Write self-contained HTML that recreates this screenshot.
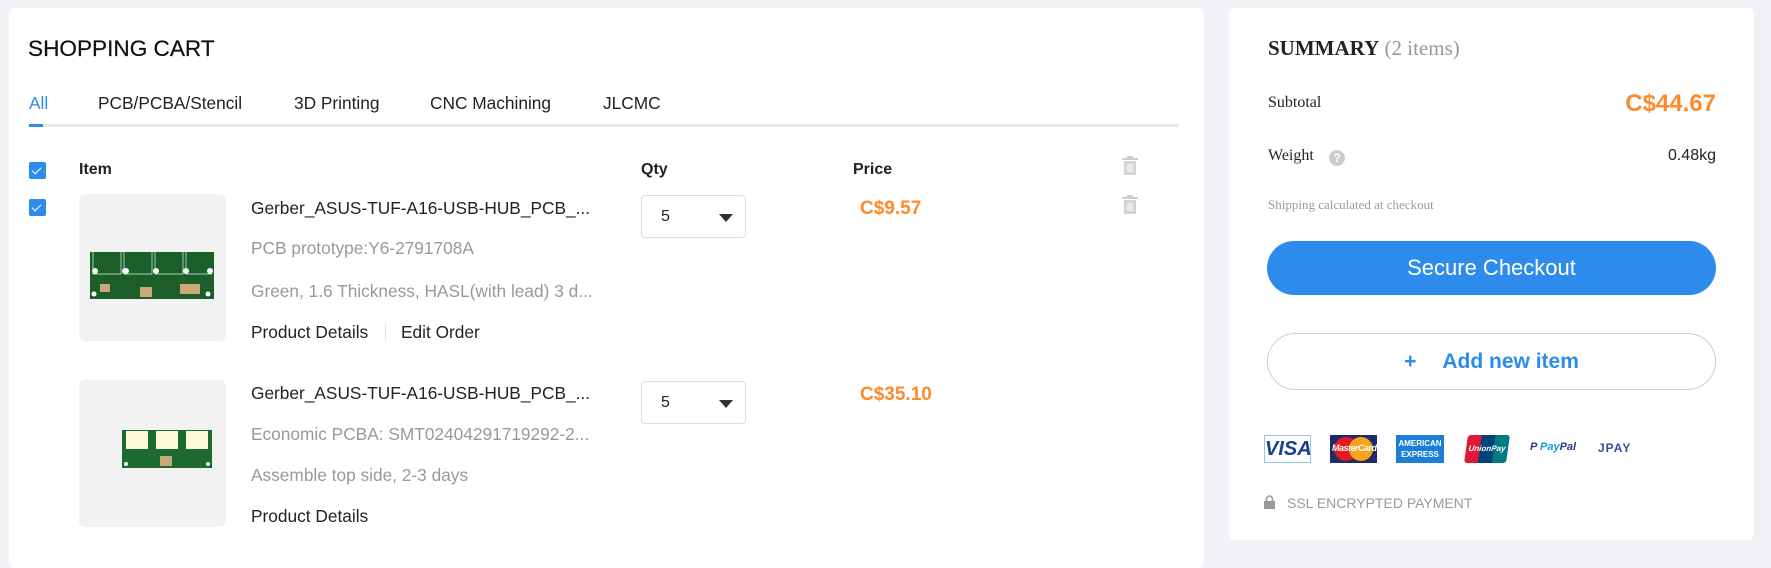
<!DOCTYPE html>
<html><head><meta charset="utf-8"><style>
*{margin:0;padding:0;box-sizing:border-box}
body{width:1771px;height:549px;background:#f0f2f5;font-family:"Liberation Sans",Arial,sans-serif;color:#222;position:relative;overflow:hidden}
.a{position:absolute;white-space:nowrap}
.panel{position:absolute;background:#fff;border-radius:6px}
.cb{position:absolute;width:17px;height:17px;background:#2d8ceb;border-radius:2px}
.cb:after{content:"";position:absolute;left:5px;top:3px;width:4px;height:8px;border:solid #fff;border-width:0 1.5px 1.5px 0;transform:rotate(45deg)}
.t16{font-size:16px}
.t17{font-size:17.3px}
.gray{color:#999}
.qty{position:absolute;width:105px;height:43px;border:1px solid #ddd;border-radius:4px}
.qty span{position:absolute;left:19px;top:12px;font-size:16px}
.qty i{position:absolute;left:77px;top:18px;border-left:7px solid transparent;border-right:7px solid transparent;border-top:8px solid #333}
.price{color:#ff8a2b;font-weight:bold;font-size:19px}
.img{position:absolute;background:#f2f2f2;border-radius:6px;width:147px;height:147px}
.serif{font-family:"Liberation Serif",serif}
.card{position:absolute;top:435px;height:28px}
</style></head><body>
<div class="panel" style="left:9px;top:8px;width:1195px;height:560px"></div>
<div class="panel" style="left:1229px;top:8px;width:525px;height:532px"></div>

<div class="a" style="left:28px;top:36px;font-size:22.6px;color:#111;-webkit-text-stroke:.2px #111">SHOPPING CART</div>
<div class="a t17" style="left:29px;top:93px;color:#2d8ceb">All</div>
<div class="a t17" style="left:98px;top:93px">PCB/PCBA/Stencil</div>
<div class="a t17" style="left:294px;top:93px">3D Printing</div>
<div class="a t17" style="left:430px;top:93px">CNC Machining</div>
<div class="a t17" style="left:603px;top:93px">JLCMC</div>
<div class="a" style="left:29px;top:124px;width:1150px;height:3px;background:#e4e7ee"></div>
<div class="a" style="left:29px;top:124px;width:14px;height:3px;background:#2d8ceb"></div>

<div class="cb" style="left:29px;top:162px"></div>
<div class="a t16" style="left:79px;top:161px;font-weight:bold">Item</div>
<div class="a t16" style="left:641px;top:161px;font-weight:bold">Qty</div>
<div class="a t16" style="left:853px;top:161px;font-weight:bold">Price</div>
<svg class="a" style="left:1121px;top:156px" width="18" height="20" viewBox="0 0 18 20"><rect x="1" y="2" width="16" height="2" fill="#ccc"/><rect x="6" y="0" width="6" height="2" fill="#ccc"/><path d="M3 5h12v14H3z" fill="#d4d4d4"/><path d="M7 8v8M9 8v8M11 8v8" stroke="#fff" stroke-width="1"/></svg>

<!-- row1 -->
<div class="cb" style="left:29px;top:199px"></div>
<div class="img" style="left:79px;top:194px"></div>
<svg class="a" style="left:90px;top:252px" width="124" height="47"><rect width="124" height="47" fill="#1c5e2a"/><g fill="#fff"><circle cx="5" cy="19" r="3"/><circle cx="35" cy="19" r="3"/><circle cx="36" cy="19" r="3"/><circle cx="66" cy="19" r="3"/><circle cx="96" cy="19" r="3"/><circle cx="120" cy="19" r="3"/><circle cx="4" cy="42" r="2.5"/><circle cx="118" cy="42" r="2.5"/></g><g stroke="#cfd" stroke-width=".7" fill="none"><path d="M3 0v22h28V0M34 0v22h28V0M65 0v22h28V0M96 0v22h26"/></g><g fill="#c8a87a"><rect x="10" y="32" width="10" height="8"/><rect x="50" y="35" width="12" height="10"/><rect x="90" y="32" width="20" height="10"/></g></svg>
<div class="a t17" style="left:251px;top:198px">Gerber_ASUS-TUF-A16-USB-HUB_PCB_...</div>
<div class="a t17 gray" style="left:251px;top:238px">PCB prototype:Y6-2791708A</div>
<div class="a t17 gray" style="left:251px;top:281px">Green, 1.6 Thickness, HASL(with lead) 3 d...</div>
<div class="a t17" style="left:251px;top:322px">Product Details</div>
<div class="a" style="left:385px;top:324px;width:1px;height:16px;background:#ddd"></div>
<div class="a t17" style="left:401px;top:322px">Edit Order</div>
<div class="qty" style="left:641px;top:195px"><span>5</span><i></i></div>
<div class="a price" style="left:860px;top:198px">C$9.57</div>
<svg class="a" style="left:1121px;top:195px" width="18" height="20" viewBox="0 0 18 20"><rect x="1" y="2" width="16" height="2" fill="#ccc"/><rect x="6" y="0" width="6" height="2" fill="#ccc"/><path d="M3 5h12v14H3z" fill="#d4d4d4"/><path d="M7 8v8M9 8v8M11 8v8" stroke="#fff" stroke-width="1"/></svg>

<!-- row2 -->
<div class="img" style="left:79px;top:380px"></div>
<svg class="a" style="left:122px;top:430px" width="90" height="38"><rect y="0" width="90" height="38" fill="#1c6a30"/><g fill="#fff8d8"><rect x="4" y="1" width="22" height="18"/><rect x="34" y="1" width="22" height="18"/><rect x="64" y="1" width="22" height="18"/></g><g fill="#c8a87a"><rect x="38" y="26" width="12" height="10"/></g><g fill="#fff"><circle cx="4" cy="34" r="2"/><circle cx="86" cy="34" r="2"/></g></svg>
<div class="a t17" style="left:251px;top:383px">Gerber_ASUS-TUF-A16-USB-HUB_PCB_...</div>
<div class="a t17 gray" style="left:251px;top:424px">Economic PCBA: SMT02404291719292-2...</div>
<div class="a t17 gray" style="left:251px;top:465px">Assemble top side, 2-3 days</div>
<div class="a t17" style="left:251px;top:506px">Product Details</div>
<div class="qty" style="left:641px;top:381px"><span>5</span><i></i></div>
<div class="a price" style="left:860px;top:384px">C$35.10</div>

<!-- summary -->
<div class="a serif" style="left:1268px;top:36px;font-size:21px"><b>SUMMARY</b> <span style="color:#999">(2 items)</span></div>
<div class="a serif" style="left:1268px;top:94px;font-size:16px">Subtotal</div>
<div class="a" style="right:55px;top:90px;font-size:24px;font-weight:bold;color:#ff8a2b">C$44.67</div>
<div class="a serif" style="left:1268px;top:147px;font-size:16px">Weight</div>
<div class="a" style="left:1329px;top:150px;width:16px;height:16px;border-radius:50%;background:#ccc;color:#fff;font-size:12px;font-weight:bold;text-align:center;line-height:16px">?</div>
<div class="a" style="right:55px;top:147px;font-size:16px">0.48kg</div>
<div class="a serif gray" style="left:1268px;top:197px;font-size:13px">Shipping calculated at checkout</div>
<div class="a" style="left:1267px;top:241px;width:449px;height:54px;border-radius:27px;background:#2d8ceb;color:#fff;font-size:22px;text-align:center;line-height:54px">Secure Checkout</div>
<div class="a" style="left:1267px;top:333px;width:449px;height:57px;border-radius:29px;border:1px solid #ccc;color:#2d8ceb;font-size:21px;font-weight:bold;text-align:center;line-height:55px"><span style="margin-right:26px">+</span>Add new item</div>

<div class="card" style="left:1264px;width:47px;border:1px solid #9cc3e0;background:#fff;font:italic 900 20px 'Liberation Sans';color:#1a3f8c;text-align:center;line-height:26px">VISA</div>
<div class="card" style="left:1330px;width:47px;background:#1b2b6b"><div class="a" style="left:4px;top:2px;width:24px;height:24px;border-radius:50%;background:#e01b22"></div><div class="a" style="left:19px;top:2px;width:24px;height:24px;border-radius:50%;background:#f7a21b"></div><div class="a" style="left:2px;top:8px;font:italic bold 9px 'Liberation Sans';color:#fff;letter-spacing:-.5px">MasterCard</div></div>
<div class="card" style="left:1396px;width:48px;background:#1c7fd6;color:#fff;font:bold 8px 'Liberation Sans';text-align:center;line-height:11px;padding-top:3px">AMERICAN<br>EXPRESS</div>
<div class="card" style="left:1466px;width:42px;background:linear-gradient(90deg,#e21836 0 33%,#00447c 33% 66%,#007b84 66%);transform:skewX(-8deg);border-radius:3px;color:#fff;font:italic bold 8px 'Liberation Sans';line-height:28px;text-align:center">UnionPay</div>
<div class="a" style="left:1530px;top:441px;font:italic bold 11px 'Liberation Sans';color:#253b80">P <span style="color:#179bd7">Pay</span><span>Pal</span></div>
<div class="a" style="left:1598px;top:441px;font:bold 12px 'Liberation Sans';color:#3b4aa0;letter-spacing:1px">JPAY</div>

<svg class="a" style="left:1264px;top:495px" width="11" height="14"><path d="M2.5 6V4a3 3 0 0 1 6 0v2" stroke="#999" stroke-width="1.6" fill="none"/><rect x="0" y="6" width="11" height="8" fill="#999"/></svg>
<div class="a gray" style="left:1287px;top:495px;font-size:14px">SSL ENCRYPTED PAYMENT</div>
</body></html>
